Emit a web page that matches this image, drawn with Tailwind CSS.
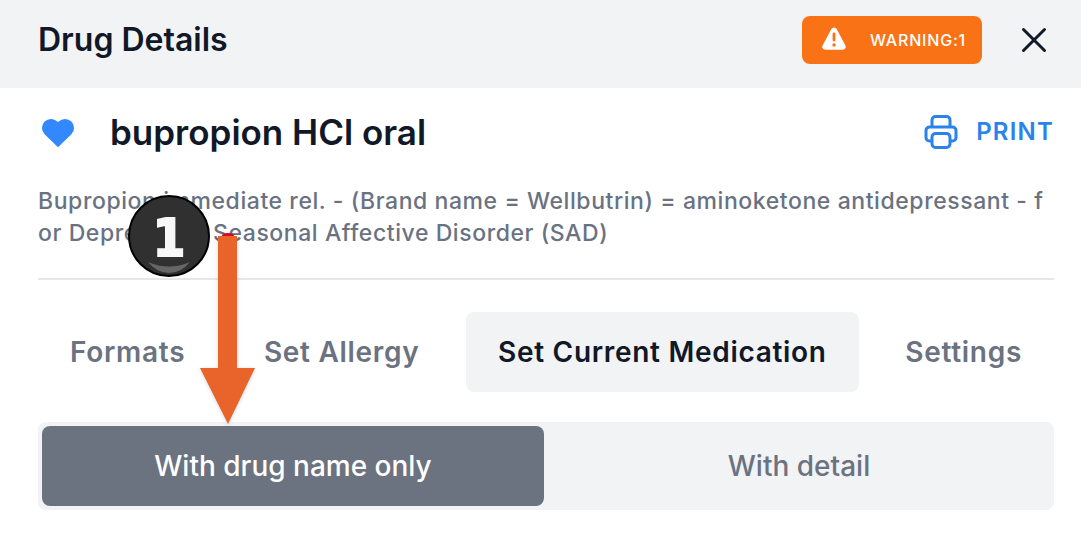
<!DOCTYPE html>
<html lang="en">
<head>
    <meta charset="UTF-8">
    <meta name="viewport" content="width=device-width, initial-scale=1.0">
    <title>Drug Details</title>
    <script src="https://cdn.jsdelivr.net/npm/@tailwindcss/browser@4"></script>
</head>
<body class="relative bg-white font-['Inter',sans-serif] text-[#111827]">
    <!-- Header -->
    <header class="flex items-center justify-between h-22 pl-[38px] pr-[31px] pb-2 bg-[#f2f3f5]">
        <h1 class="text-[32px] leading-10 font-semibold">Drug Details</h1>
        <div class="flex items-center gap-9">
            <button type="button" class="flex items-center gap-5 h-12 px-4 rounded-lg bg-[#f97316] text-white text-base font-medium tracking-wider">
                <svg class="w-8 h-8" viewBox="0 0 32 32" aria-hidden="true">
                    <path d="M13.2 5.2a3.2 3.2 0 0 1 5.6 0l8.6 16.3a2.9 2.9 0 0 1-2.5 4.3H7.1a2.9 2.9 0 0 1-2.5-4.3z" fill="currentColor"/>
                    <path d="M16 10v6" stroke="#f97316" stroke-width="2.8" stroke-linecap="round"/>
                    <circle cx="16" cy="21" r="1.7" fill="#f97316"/>
                </svg>
                WARNING:1
            </button>
            <button type="button" aria-label="Close">
                <svg class="w-8 h-8" viewBox="0 0 32 32" fill="none" stroke="currentColor" stroke-width="3" stroke-linecap="round" aria-hidden="true">
                    <path d="M5.5 5.5l21 21M26.5 5.5l-21 21"/>
                </svg>
            </button>
        </div>
    </header>

    <main class="pl-[38px] pr-[27px] pt-6">
        <!-- Drug name -->
        <div class="flex items-center justify-between">
            <div class="flex items-center gap-8">
                <button type="button" aria-label="Favorite" class="text-[#3388ff]">
                    <svg class="w-10 h-10" viewBox="0 0 40 40" fill="currentColor" aria-hidden="true">
                        <path d="M6.6 9.6a9 9 0 0 1 12.8 0l.6.7.6-.7a9 9 0 0 1 12.8 12.7L20 35.2 6.600 22.300a9 9 0 0 1 0-12.700z"/>
                    </svg>
                </button>
                <h2 class="text-[35px] leading-10 font-semibold">bupropion HCl oral</h2>
            </div>
            <button type="button" class="flex items-center gap-4 h-10 text-[#2b83ea] text-2xl font-semibold tracking-wider">
                <svg class="w-10 h-10" viewBox="0 0 40 40" fill="none" stroke="currentColor" stroke-width="3" stroke-linejoin="round" aria-hidden="true">
                    <path d="M12 15V8a3.5 3.5 0 0 1 3.5-3.500h11A3.500 3.500 0 0 1 30 8v7"/>
                    <path d="M12 29H9.500A3.500 3.500 0 0 1 6 25.500v-7A3.500 3.500 0 0 1 9.500 15h23a3.500 3.500 0 0 1 3.500 3.500v7a3.500 3.500 0 0 1-3.500 3.500H30"/>
                    <rect x="12" y="21.500" width="18" height="14" rx="3.500"/>
                </svg>
                PRINT
            </button>
        </div>

        <p class="mt-[33px] pb-[29px] border-b-2 border-gray-200 text-[23px] leading-8 font-medium tracking-wide text-gray-500 break-all">Bupropion immediate rel. - (Brand name = Wellbutrin) = aminoketone antidepressant - for Depression, Seasonal Affective Disorder (SAD)</p>

        <!-- Tabs -->
        <nav class="flex justify-between mt-8 text-[28px] leading-8 font-semibold tracking-wide text-[#6b7280]">
            <button type="button" class="h-20 px-8 rounded-lg">Formats</button>
            <button type="button" class="h-20 px-8 rounded-lg">Set Allergy</button>
            <button type="button" class="h-20 px-8 rounded-lg bg-[#f2f3f5] text-[#111827]">Set Current Medication</button>
            <button type="button" class="h-20 px-8 rounded-lg">Settings</button>
        </nav>

        <!-- Medication mode -->
        <div class="grid grid-cols-2 gap-1 mt-[30px] p-1 rounded-lg bg-[#f2f3f5] text-[28px] leading-8 font-medium text-[#6b7280]">
            <button type="button" class="h-20 rounded-lg bg-[#6b7280] text-white">With drug name only</button>
            <button type="button" class="h-20 rounded-lg">With detail</button>
        </div>
    </main>

    <!-- Step marker -->
    <div class="absolute left-32 top-[195px] flex items-center justify-center w-[82px] h-[82px] pt-1 rounded-full border-2 border-black bg-[#303030]">
        <span class="font-['DejaVu_Sans_Condensed','DejaVu_Sans',sans-serif] text-[52px] leading-none font-bold text-[#f7f7f7] [-webkit-text-stroke:2px_#f7f7f7]">1</span>
        <svg class="absolute bottom-0 w-11 h-4" viewBox="0 0 44 16" aria-hidden="true">
            <path d="M1 3Q22 12 43 3Q34 14 22 14T1 3z" fill="#666"/>
        </svg>
    </div>
    <svg class="absolute left-[196px] top-[230px] w-16 h-[198px] drop-shadow-sm" viewBox="0 0 64 198" aria-hidden="true">
        <path d="M26 6q0-3 6-3t6 3z" fill="#d40b1c"/>
        <path d="M22 6h19v132h18L32 194 4 138h18z" fill="#e9642b"/>
    </svg>
</body>
</html>
